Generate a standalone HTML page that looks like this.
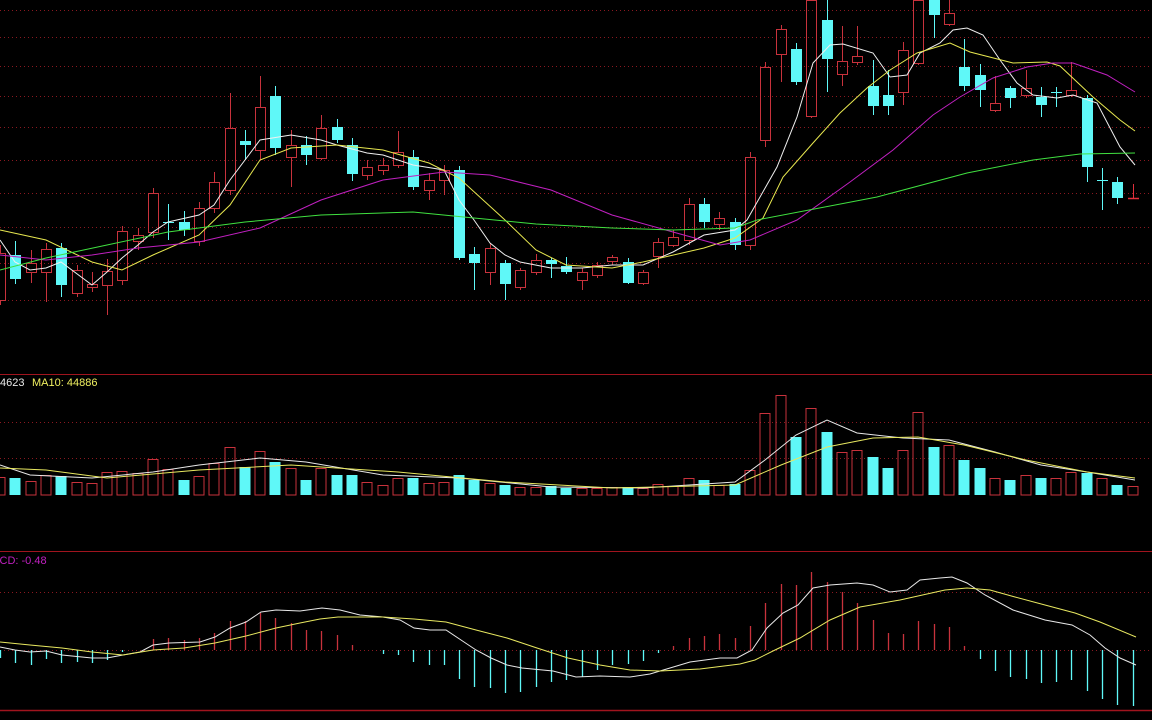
<!DOCTYPE html>
<html><head><meta charset="utf-8"><style>
html,body{margin:0;padding:0;background:#000;width:1152px;height:720px;overflow:hidden}
svg{display:block}
text{font-family:"Liberation Sans",sans-serif;font-size:11px}
</style></head><body>
<svg id="s" width="1152" height="720" viewBox="0 0 1152 720" xmlns="http://www.w3.org/2000/svg">
<rect width="1152" height="720" fill="#000"/>
<g id="grid"></g>
<line x1="0" y1="374.5" x2="1152" y2="374.5" stroke="#a0141e" stroke-width="1"/>
<line x1="0" y1="551.5" x2="1152" y2="551.5" stroke="#a0141e" stroke-width="1"/>
<line x1="0" y1="710.5" x2="1152" y2="710.5" stroke="#a0141e" stroke-width="1.5"/>
<g id="c"></g>
<text x="0" y="386" fill="#e8e8e8">4623</text>
<text x="32" y="386" fill="#f0f060">MA10: 44886</text>
<text x="-17" y="564" fill="#c020c0">MACD: -0.48</text>
</svg>
<script>
var NS="http://www.w3.org/2000/svg";
var g=document.getElementById('c'),gr=document.getElementById('grid');
function el(t,a,p){var e=document.createElementNS(NS,t);for(var k in a)e.setAttribute(k,a[k]);(p||g).appendChild(e);return e;}
[10,37,66,96,127,160,193,227,263,300,422,458,592,650].forEach(function(y){
 el('line',{x1:0,y1:y+.5,x2:1152,y2:y+.5,stroke:'#8a1820','stroke-width':1,'stroke-dasharray':'1 3'},gr);});
var R='#c8323c',C='#5ff8f8';
// x, type(r/c/x), top, bottom, high, low
var K=[
[0,'r',253,300,245,305],[15,'c',255,279,241,284],[31,'r',263,272,250,283],[46,'r',249,272,243,302],[61,'c',248,285,243,297],
[77,'r',270,293,265,297],[92,'r',284,287,272,292],[107,'r',271,285,259,315],[122,'r',231,280,226,285],[138,'r',235,241,228,250],
[153,'r',193,232,188,238],[168,'x',222,222,204,240],[184,'c',222,230,211,236],[199,'r',208,241,202,246],[214,'r',182,208,172,213],
[230,'r',128,190,93,195],[245,'c',141,145,130,160],[260,'r',107,150,76,160],[275,'c',96,148,86,155],[291,'r',145,157,130,187],
[306,'c',145,155,136,165],[321,'r',128,158,115,160],[337,'c',127,140,119,143],[352,'c',145,174,138,181],[367,'r',167,175,160,180],
[383,'r',165,170,158,175],[398,'r',152,165,131,168],[413,'c',157,187,150,190],[429,'r',180,190,173,200],[444,'r',170,180,165,195],
[459,'c',170,258,166,260],[474,'c',254,263,247,290],[490,'r',248,272,243,285],[505,'c',263,284,260,300],[520,'r',270,287,268,290],
[536,'r',260,272,254,275],[551,'c',260,264,258,278],[566,'c',266,272,257,274],[582,'r',272,280,268,290],[597,'r',265,275,262,278],
[612,'r',257,261,255,265],[628,'c',262,283,258,284],[643,'r',272,283,270,285],[658,'r',242,256,238,268],[673,'r',237,245,230,247],
[689,'r',204,240,198,245],[704,'c',204,222,198,228],[719,'r',218,224,212,230],[735,'c',222,245,218,250],[750,'r',157,245,152,250],
[765,'r',67,140,62,147],[781,'r',29,54,25,82],[796,'c',49,82,43,85],[811,'r',0,116,0,118],[827,'c',20,59,0,92],
[842,'r',61,74,26,86],[857,'r',56,62,26,65],[873,'c',86,106,60,115],[888,'c',95,106,70,115],[903,'r',50,92,42,105],
[918,'r',0,63,0,65],[934,'c',0,15,0,38],[949,'r',13,24,0,26],[964,'c',67,86,39,91],[980,'c',75,90,64,107],
[995,'r',103,110,76,112],[1010,'c',88,98,86,108],[1026,'r',88,95,70,98],[1041,'c',97,105,87,117],[1056,'x',92,92,87,107],
[1071,'r',90,95,62,97],[1087,'c',98,167,95,182],[1102,'x',180,180,168,210],[1117,'c',182,198,177,204],[1133,'d',198,198,184,198]];
var V=[477,478,481,475,476,482,483,472,471,473,459,469,480,476,463,447,467,451,462,468,
480,468,475,475,482,485,478,478,483,482,475,480,483,485,487,487,486,488,488,488,487,487,488,484,486,478,480,
485,484,470,413,395,437,408,432,452,450,457,468,450,412,447,445,460,468,478,480,475,478,478,472,473,478,485,486];
var M=[658,663,665,659,663,662,663,660,652,650,639,638,640,638,633,621,621,613,618,623,630,631,635,645,650,654,655,662,665,665,679,687,688,693,692,687,682,680,677,670,665,664,661,653,646,638,
636,634,638,626,603,584,585,572,582,592,603,620,633,634,621,624,627,646,659,671,677,679,683,682,680,691,699,705,706];
function poly(pts,col,w){el('polyline',{points:pts.map(function(p){return p.join(',')}).join(' '),fill:'none',stroke:col,'stroke-width':w||1});}
// volume
K.forEach(function(k,i){var x=k[0],t=V[i],col=(k[1]=='c')?C:R;
 if(k[1]=='c') el('rect',{x:x-5.5,y:t,width:11,height:495-t,fill:C});
 else el('rect',{x:x-5,y:t+.5,width:10,height:494.5-t,fill:'none',stroke:R,'stroke-width':1});});
poly([[0,465],[30,475],[92,478],[153,472],[199,465],[260,458],[306,462],[383,475],[459,478],[551,487],[643,488],[735,482],[765,460],[796,435],[827,420],[857,433],[903,438],[949,440],[995,452],[1041,465],[1087,472],[1135,480]],'#e8e8e8');
poly([[0,468],[46,470],[107,478],[199,470],[291,465],[398,472],[505,482],[612,488],[735,485],[781,465],[827,447],[873,438],[918,437],[964,445],[1026,460],[1087,472],[1135,478]],'#e8e860');
// macd
K.forEach(function(k,i){var x=k[0]+.5,t=M[i];if(Math.abs(t-650)<1)return;
 el('line',{x1:x,y1:650,x2:x,y2:t,stroke:t<650?R:C,'stroke-width':1.3});});
poly([[0,647],[15,650],[30,652],[46,651],[62,655],[92,658],[107,658],[123,655],[140,652],[153,645],[169,643],[200,642],[215,637],[230,628],[246,622],[261,612],[276,610],[300,611],[322,608],[340,610],[360,615],[383,617],[400,620],[414,628],[430,630],[446,630],[461,640],[476,650],[491,658],[507,665],[522,668],[553,671],[576,677],[600,676],[630,677],[650,674],[670,668],[690,662],[720,658],[737,658],[752,650],[767,628],[783,613],[798,605],[813,588],[830,585],[857,583],[873,585],[890,592],[907,590],[920,580],[940,578],[952,577],[967,583],[985,595],[1013,610],[1045,620],[1072,625],[1090,635],[1105,648],[1120,658],[1136,665]],'#e8e8e8');
poly([[0,642],[30,645],[62,648],[92,652],[123,655],[153,650],[184,648],[215,643],[246,636],[276,628],[300,623],[320,619],[338,617],[383,617],[414,619],[446,622],[476,630],[507,638],[537,648],[568,658],[600,665],[630,670],[660,671],[700,669],[740,664],[755,660],[775,650],[800,638],[830,620],[860,607],[900,600],[945,590],[967,588],[990,590],[1015,597],[1045,605],[1075,613],[1100,622],[1136,637]],'#e8e860');
// candles
K.forEach(function(k){var x=k[0],t=k[1];
 var col=(t=='c'||t=='x')?C:R;
 if(t=='x'&&k[0]==1056) col=C;
 var xc=x+.5;
 if(t=='c'){el('line',{x1:xc,y1:k[4],x2:xc,y2:k[5],stroke:C});el('rect',{x:x-5,y:k[2],width:11,height:Math.max(1,k[3]-k[2]),fill:C});}
 else if(t=='r'){el('line',{x1:xc,y1:k[4],x2:xc,y2:k[2],stroke:R});el('line',{x1:xc,y1:k[3],x2:xc,y2:k[5],stroke:R});
  el('rect',{x:x-4.5,y:k[2]+.5,width:10,height:Math.max(1,k[3]-k[2]),fill:'none',stroke:R});}
 else if(t=='x'){el('line',{x1:xc,y1:k[4],x2:xc,y2:k[5],stroke:C});el('line',{x1:x-5,y1:k[2]+.5,x2:x+6,y2:k[2]+.5,stroke:C});}
 else {el('line',{x1:xc,y1:k[4],x2:xc,y2:k[5],stroke:'#e0303c'});el('line',{x1:x-5,y1:k[2]+.5,x2:x+6,y2:k[2]+.5,stroke:'#e0303c','stroke-width':1.5});}
});
// MAs
poly([[0,240],[15,262],[30,270],[46,268],[61,262],[92,285],[107,272],[122,258],[138,245],[153,232],[168,222],[199,215],[214,205],[230,180],[260,140],[291,135],[321,140],[337,145],[367,153],[383,155],[413,165],[444,170],[459,200],[474,220],[490,243],[505,255],[520,262],[551,268],[582,268],[612,265],[643,265],[673,252],[704,235],[735,230],[747,220],[777,167],[797,117],[813,63],[830,45],[843,44],[873,53],[890,77],[907,75],[920,53],[940,43],[953,30],[967,28],[983,35],[1000,60],[1017,83],[1033,95],[1057,98],[1073,95],[1097,103],[1120,147],[1135,165]],'#f0f0f0');
poly([[0,230],[46,240],[92,262],[122,270],[153,255],[199,235],[230,205],[260,160],[291,148],[337,145],[383,150],[429,163],[459,178],[505,220],[536,250],[566,265],[612,268],[643,262],[704,248],[735,238],[763,218],[783,177],[813,143],[840,113],[867,88],[890,70],[917,53],[950,43],[970,52],[1013,63],[1047,62],[1060,66],[1093,97],[1120,120],[1135,131]],'#e8e850');
poly([[0,255],[46,260],[92,255],[138,248],[199,242],[260,228],[321,200],[383,180],[444,172],[490,175],[551,190],[612,215],[673,232],[720,245],[750,240],[797,220],[850,182],[893,150],[933,115],[960,97],[993,78],[1027,67],[1053,63],[1073,63],[1107,75],[1135,92]],'#c020c0');
poly([[0,270],[46,258],[107,245],[168,232],[245,222],[321,215],[413,212],[474,218],[536,224],[612,228],[673,230],[735,228],[757,220],[877,197],[967,173],[1033,160],[1080,154],[1135,153]],'#40e040');
</script>
</body></html>
